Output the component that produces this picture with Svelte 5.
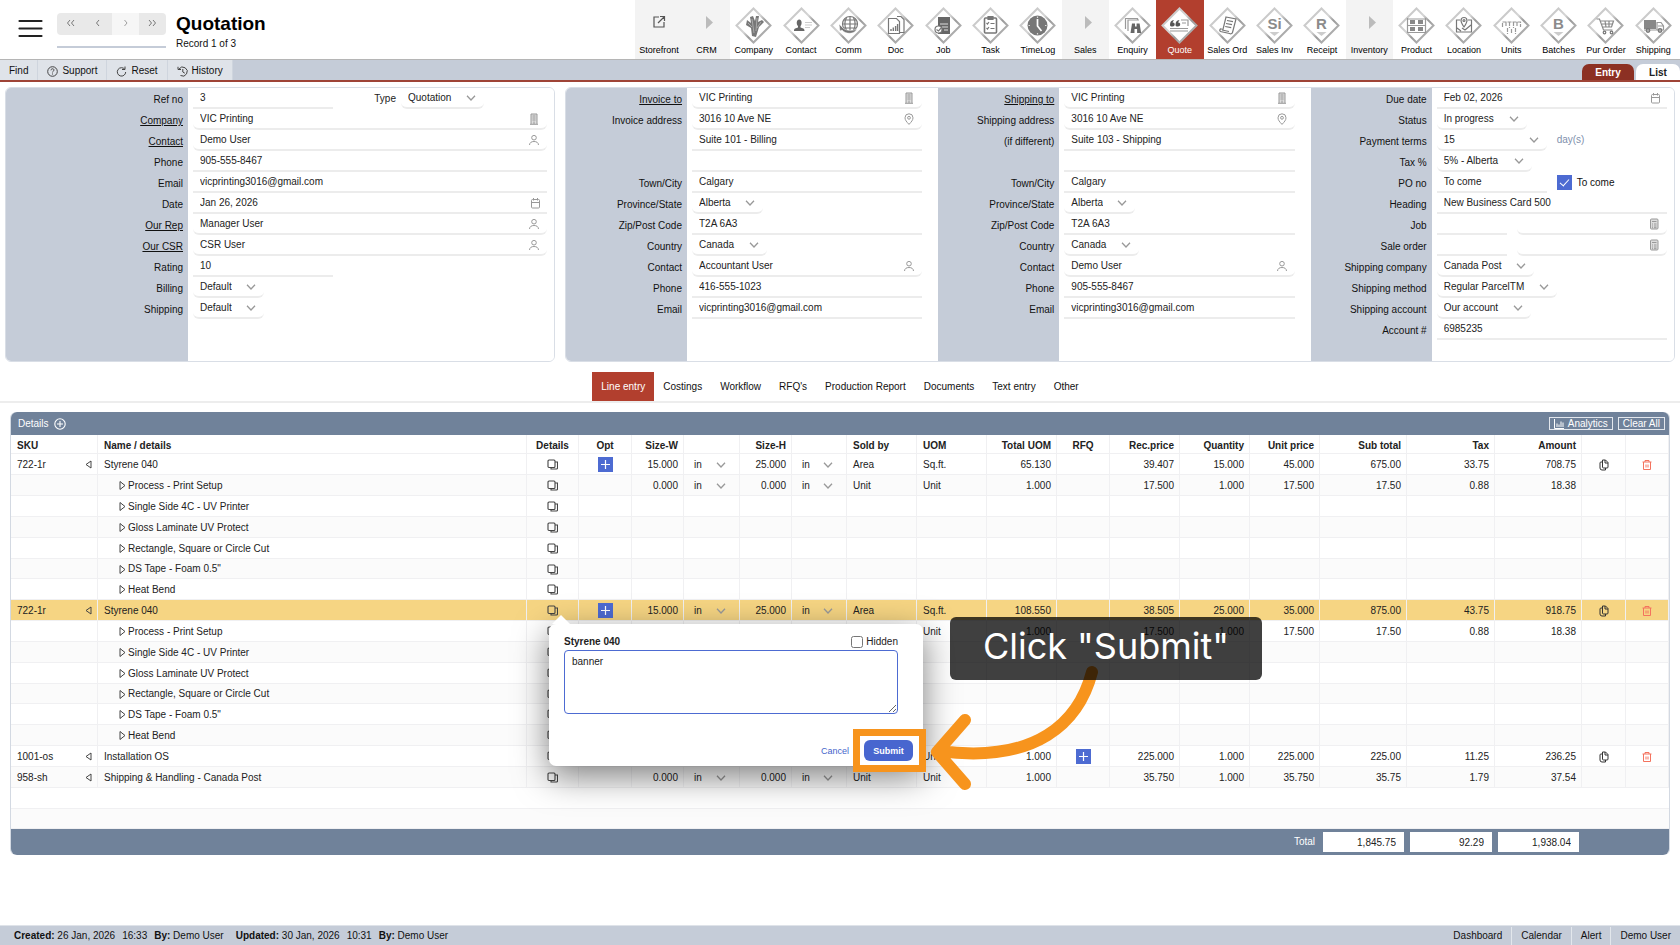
<script lang="ts">
	let modules = [
		{ name: 'Storefront', icon: 'external', group: true },
		{ name: 'CRM', icon: 'arrow', group: true },
		{ name: 'Company', icon: 'company' },
		{ name: 'Contact', icon: 'contact' },
		{ name: 'Comm', icon: 'comm' },
		{ name: 'Doc', icon: 'doc' },
		{ name: 'Job', icon: 'job' },
		{ name: 'Task', icon: 'task' },
		{ name: 'TimeLog', icon: 'time' },
		{ name: 'Sales', icon: 'arrow', group: true },
		{ name: 'Enquiry', icon: 'enquiry' },
		{ name: 'Quote', icon: 'quote', active: true },
		{ name: 'Sales Ord', icon: 'order' },
		{ name: 'Sales Inv', icon: 'Si' },
		{ name: 'Receipt', icon: 'R' },
		{ name: 'Inventory', icon: 'arrow', group: true },
		{ name: 'Product', icon: 'product' },
		{ name: 'Location', icon: 'location' },
		{ name: 'Units', icon: 'units' },
		{ name: 'Batches', icon: 'B' },
		{ name: 'Pur Order', icon: 'cart' },
		{ name: 'Shipping', icon: 'truck' }
	];

	const text = (value = '', size = '') => ({ kind: 'text', value, size });
	const combo = (value: string, icon: string) => ({ kind: 'text', value, icon, size: '', soft: true });
	const select = (value: string, size = '') => ({ kind: 'select', value, size });
	const row = (label: string, ...controls: any[]) => ({ label, controls, link: false });
	const linked = (label: string, ...controls: any[]) => ({ label, controls, link: true });

	let general = [
		row('Ref no', text('3', 'short'), { kind: 'select', value: 'Quotation', before: 'Type', size: '' }),
		linked('Company', combo('VIC Printing', 'building')),
		linked('Contact', combo('Demo User', 'user')),
		row('Phone', text('905-555-8467')),
		row('Email', text('vicprinting3016@gmail.com')),
		row('Date', { kind: 'text', value: 'Jan 26, 2026', icon: 'calendar', size: '' }),
		linked('Our Rep', combo('Manager User', 'user')),
		linked('Our CSR', combo('CSR User', 'user')),
		row('Rating', text('10', 'short')),
		row('Billing', select('Default')),
		row('Shipping', select('Default'))
	];

	let invoice = [
		linked('Invoice to', combo('VIC Printing', 'building')),
		row('Invoice address', combo('3016 10 Ave NE', 'pin')),
		row('', text('Suite 101 - Billing')),
		row('', text()),
		row('Town/City', text('Calgary')),
		row('Province/State', select('Alberta')),
		row('Zip/Post Code', text('T2A 6A3')),
		row('Country', select('Canada')),
		row('Contact', combo('Accountant User', 'user')),
		row('Phone', text('416-555-1023')),
		row('Email', text('vicprinting3016@gmail.com'))
	];

	let shipping = [
		linked('Shipping to', combo('VIC Printing', 'building')),
		row('Shipping address', combo('3016 10 Ave NE', 'pin')),
		row('(if different)', text('Suite 103 - Shipping')),
		row('', text()),
		row('Town/City', text('Calgary')),
		row('Province/State', select('Alberta')),
		row('Zip/Post Code', text('T2A 6A3')),
		row('Country', select('Canada')),
		row('Contact', combo('Demo User', 'user')),
		row('Phone', text('905-555-8467')),
		row('Email', text('vicprinting3016@gmail.com'))
	];

	let terms = [
		row('Due date', { kind: 'text', value: 'Feb 02, 2026', icon: 'calendar', size: '' }),
		row('Status', select('In progress')),
		row('Payment terms', select('15', 'medium'), { kind: 'note', value: 'day(s)' }),
		row('Tax %', select('5% - Alberta')),
		row('PO no', text('To come', 'medium'), { kind: 'check', value: 'To come' }),
		row('Heading', text('New Business Card 500')),
		row('Job', text('', 'small'), combo('', 'calc')),
		row('Sale order', text('', 'small'), combo('', 'calc')),
		row('Shipping company', select('Canada Post')),
		row('Shipping method', select('Regular ParcelTM')),
		row('Shipping account', select('Our account')),
		row('Account #', text('6985235'))
	];

	let tabs = ['Line entry', 'Costings', 'Workflow', "RFQ's", 'Production Report', 'Documents', 'Text entry', 'Other'];

	let widths = [87, 0, 52, 53, 52, 56, 52, 55, 70, 70, 70, 53, 70, 70, 70, 87, 88, 87, 44, 43];

	let steps = [
		'Single Side 4C - UV Printer',
		'Gloss Laminate UV Protect',
		'Rectangle, Square or Circle Cut',
		'DS Tape - Foam 0.5"',
		'Heat Bend'
	].map((name) => ({ name, sub: true }));

	let setup = {
		name: 'Process - Print Setup', sub: true, w: '0.000', h: '0.000', soldBy: 'Unit', uom: 'Unit',
		nums: ['1.000', '17.500', '1.000', '17.500', '17.50', '0.88', '18.38']
	};

	let lines: any[] = [
		{
			sku: '722-1r', name: 'Styrene 040', opt: true, actions: true, w: '15.000', h: '25.000', soldBy: 'Area', uom: 'Sq.ft.',
			nums: ['65.130', '39.407', '15.000', '45.000', '675.00', '33.75', '708.75']
		},
		setup,
		...steps,
		{
			sku: '722-1r', name: 'Styrene 040', opt: true, actions: true, selected: true, w: '15.000', h: '25.000', soldBy: 'Area', uom: 'Sq.ft.',
			nums: ['108.550', '38.505', '25.000', '35.000', '875.00', '43.75', '918.75']
		},
		setup,
		...steps,
		{
			sku: '1001-os', name: 'Installation OS', rfq: true, actions: true, w: '0.000', h: '0.000', soldBy: 'Unit', uom: 'Unit',
			nums: ['1.000', '225.000', '1.000', '225.000', '225.00', '11.25', '236.25']
		},
		{
			sku: '958-sh', name: 'Shipping & Handling - Canada Post', w: '0.000', h: '0.000', soldBy: 'Unit', uom: 'Unit',
			nums: ['1.000', '35.750', '1.000', '35.750', '35.75', '1.79', '37.54']
		}
	];

	let note = $state('banner');
	let hidden = $state(false);
</script>

{#snippet chevron()}
	<svg class="chevron" width="10" height="6" viewBox="0 0 10 6" fill="none" stroke="#999" stroke-width="1.3"><path d="M1 .8l4 4.2 4-4.2" /></svg>
{/snippet}

{#snippet fieldIcon(name)}
	<svg class="field-icon" width="12" height="12" viewBox="0 0 12 12" fill="none" stroke="#999" stroke-width="1">
		{#if name === 'building'}
			<path d="M3 11V1h6v10M2 11.3h8" fill="#ddd" /><path d="M4.5 3h3M4.5 5h3M4.5 7h3M6 8.5V11" />
		{:else if name === 'user'}
			<circle cx="6" cy="3.7" r="2.3" /><path d="M1.5 11c.2-2.5 2-3.5 4.5-3.5s4.3 1 4.5 3.5" />
		{:else if name === 'pin'}
			<path d="M6 11.4C3.5 8.7 2 7 2 4.8a4 4 0 0 1 8 0C10 7 8.5 8.7 6 11.4z" /><circle cx="6" cy="4.8" r="1.4" />
		{:else if name === 'calendar'}
			<rect x="3.5" y="2.5" width="8" height="8.5" rx="1" /><path d="M3.5 5.5h8M5.500 1v2.500M9.500 1v2.500" />
		{:else}
			<rect x="2.5" y="1" width="7.5" height="10" rx="1" fill="#ddd" /><path d="M4 3.5h4.5M4 6h1M6 6h2.5M4 8h1M6 8h2.5M4 9.7h1M6 9.7h2.5" />
		{/if}
	</svg>
{/snippet}

{#snippet moduleIcon(name)}
	<svg class="module-icon" width="37" height="37" viewBox="0 0 37 37" fill="none" stroke="#777" stroke-width="1.2">
		{#if name === 'external'}
			<path d="M18 10h-5v10h10v-5M19 9.5h4.5V14M23.3 9.800L17 16" stroke="#555" />
		{:else if name === 'arrow'}
			<path d="M18 9v13l7-6.5z" fill="#bbb" stroke="none" />
		{:else}
			<path d="M18.5 1.5l17 17-17 17-17-17z" fill="#fff" stroke="url(#edge)" stroke-width="2" />
			{#if name === 'company'}
				<path d="M17 29l-1-8-5-3 1-5 4 3-1-6 3-1 2 5 1-5h3l-1 6 4-2 2 2-5 5-3 10z" fill="#777" stroke="none" />
				<path d="M17 12l2 14M22 11l-1 13M26 15l-4 6M13 16l4 4" stroke="#ccc" stroke-width=".6" />
			{:else if name === 'contact'}
				<path d="M11 24c0-3 2-2.500 4-3.500v-1.500c-2-2-1.500-6.500 1.200-6.500s3.200 4.500 1.300 6.500v1.500c2 1 4 .5 4 3.500z" fill="#666" stroke="none" />
				<path d="M22 15.5h7M22 18h7M22 20.5h5" stroke="#ccc" />
			{:else if name === 'comm'}
				<circle cx="20" cy="17" r="7.5" /><path d="M12.5 17h15M13.5 13h13M14 21h12M20 9.5v15M16.5 10.500c-2 4-2 9 0 13M23.5 10.500c2 4 2 9 0 13" />
				<path d="M9 17l4 4c3 3 10 3 14 1-2 5-11 6-15 1l-2 1z" fill="#777" stroke="#fff" stroke-width=".5" />
			{:else if name === 'doc'}
				<path d="M11.5 11.5h8l3 3v12h-11z" fill="#fff" /><path d="M20 9.5h4l3 3v13h-4" />
				<path d="M14 24v-2M16.3 24v-3.5M18.6 24v-5M20.6 24v-7" stroke-width="1.4" />
			{:else if name === 'job'}
				<path d="M13 10h12v17H13z" fill="#666" stroke="none" /><path d="M15 17h8M17 20h6M19 23h4" stroke="#ddd" />
				<circle cx="13.5" cy="22.5" r="3.5" fill="#fff" /><path d="M11.5 22.5l2 1.500 3-3.500" />
			{:else if name === 'task'}
				<rect x="12.5" y="11" width="12" height="15" rx="1" stroke-width="1.6" /><path d="M16 9.5h5v3h-5z" fill="#777" />
				<path d="M14.5 16l1 1 1.5-2M14.5 21l1 1 1.5-2M18.5 16.5h4M18.5 21.5h4" />
			{:else if name === 'time'}
				<circle cx="18.5" cy="18.5" r="10" fill="#777" stroke="none" /><path d="M18.5 12v7l4 5" stroke="#fff" stroke-width="1.7" />
				<path d="M18.5 9.5v1.5M27.5 18.5H26M9.5 18.5H11M18.5 27.5V26" stroke="#ddd" />
			{:else if name === 'enquiry'}
				<path d="M14 24V13h11M11.500 22V11.500h12v2" stroke="#999" />
				<path d="M16.5 26l1.500-9.500h3v3h1.6v-3h3l1.500 9.5h-4v-4h-2.600v4z" fill="#666" stroke="none" />
			{:else if name === 'quote'}
				<path d="M9 18c0-3 1-4.5 4-5l-1.5 2.5c3-.5 3 4 0 4-1.5 0-2.5-.5-2.5-1.5zM14.5 18c0-3 1-4.5 4-5L17 15.500c3-.5 3 4 0 4-1.5 0-2.5-.5-2.5-1.500z" fill="#555" stroke="none" />
				<path d="M20 13h7v6M21 16h4M9 21.5h18M9 24h18" stroke="#999" />
			{:else if name === 'order'}
				<path d="M17 10l10 2-3.5 13.5c-.5 1.500-2 1.500-3 1l-9-2c-1.500-1-.5-3 1-2.5l1.500.3z" /><path d="M18 13.500l6 1.200M17 16.500l6 1.200M16.200 19.500l6 1.200M13 23l7 1.500" />
			{:else if name === 'product'}
				<path d="M9.5 11v15M27.5 11v15M10 18.500h17M10 25.500h17M10 12h17" stroke="#999" /><path d="M12 13h5v4h-5zM20 13h5v4h-5zM12 20h5v4h-5zM20 20h5v4h-5z" fill="#888" stroke="none" />
			{:else if name === 'location'}
				<path d="M15 13h-3.5v12h15V13H23M12 21l4 3M17 21l3 2 6-5" /><path d="M19 20c-2-3-3-4.500-3-6.500a3 3 0 0 1 6 0c0 2-1 3.500-3 6.500z" fill="#fff" /><circle cx="19" cy="13.5" r="1" />
			{:else if name === 'units'}
				<path d="M9.5 20v-5h18v5M13 15v4M16.5 15v6M20.5 15v6M24 15v4M14.5 21v6M18.5 22v5M22.5 21v6" stroke="#999" stroke-dasharray="4 1" />
			{:else if name === 'cart'}
				<path d="M9.5 12h3l4 11h9M13.5 14h13l-2 6h-9M15 17h11M18 14l1 6M22 14v6" stroke="#888" /><circle cx="17.5" cy="25.5" r="1.3" /><circle cx="24.5" cy="25.5" r="1.3" />
			{:else if name === 'truck'}
				<path d="M9 13h12v9H9z" fill="#888" stroke="none" /><path d="M22 15.5h4l2.5 3.500v4H22zM23 19h5M9 23h13" stroke="#999" /><circle cx="13" cy="23.5" r="1.8" fill="#aaa" /><circle cx="25" cy="23.5" r="1.8" fill="#aaa" />
			{:else}
				<text x="18.5" y="22" text-anchor="middle" font-size="15" font-weight="bold" fill="#8b8b8b" stroke="none">{name}</text>
				<path d="M13.500 25h10l-5 4z" fill="#ccc" stroke="none" />
			{/if}
		{/if}
	</svg>
{/snippet}

{#snippet form(id, rows)}
	<div class="form-section {id}">
		{#each rows as r, i}
			<div class="form-row">
				<label for="{id}-{i}-0">
					{#if r.link}<a href="#{id}">{r.label}</a>{:else}{r.label}{/if}
				</label>
				<div class="controls">
					{#each r.controls as c, j}
						{#if c.kind === 'text'}
							<span class="field {c.size}" class:soft={c.soft}>
								<input id="{id}-{i}-{j}" type="text" value={c.value} aria-label={r.label || 'Address line'} />
								{#if c.icon}{@render fieldIcon(c.icon)}{/if}
							</span>
						{:else if c.kind === 'select'}
							<span class="pair">
								{#if c.before}<label class="before" for="{id}-{i}-{j}">{c.before}</label>{/if}
								<span class="drop {c.size}">
									<select id="{id}-{i}-{j}"><option>{c.value}</option></select>
									{@render chevron()}
								</span>
							</span>
						{:else if c.kind === 'note'}
							<span class="note">{c.value}</span>
						{:else}
							<label class="check"><input type="checkbox" checked />{c.value}</label>
						{/if}
					{/each}
				</div>
			</div>
		{/each}
	</div>
{/snippet}

{#snippet unit(line)}
	{#if line.w}
		<span class="unit"><select aria-label="Unit"><option>in</option></select>{@render chevron()}</span>
	{/if}
{/snippet}

{#snippet plus(label)}
	<button class="plus" aria-label={label}>
		<svg width="15" height="15" viewBox="0 0 15 15" stroke="#fff" stroke-width="1.2"><path d="M7.5 3v9M3 7.5h9" /></svg>
	</button>
{/snippet}

<div class="page">
	<svg class="defs" width="0" height="0" aria-hidden="true">
		<linearGradient id="edge" x1="0" y1="0" x2="1" y2="1">
			<stop offset="0" stop-color="#bdbdbd" /><stop offset=".45" stop-color="#d5d5d5" /><stop offset=".6" stop-color="#9a9a9a" /><stop offset="1" stop-color="#c8c8c8" />
		</linearGradient>
	</svg>

	<header>
		<button class="burger" aria-label="Menu">
			<svg width="25" height="19" viewBox="0 0 25 19" stroke="#222" stroke-width="2.2" stroke-linecap="round"><path d="M1.5 2h22M1.5 9.5h22M1.5 17h22" /></svg>
		</button>
		<div class="pager">
			<div class="pager-buttons">
				<button aria-label="First"><svg width="9" height="8" viewBox="0 0 9 8"><path d="M4 1L1.5 4 4 7M8 1L5.5 4 8 7" /></svg></button>
				<button aria-label="Previous"><svg width="9" height="8" viewBox="0 0 9 8"><path d="M6 1L3.5 4 6 7" /></svg></button>
				<button aria-label="Next" class="dim"><svg width="9" height="8" viewBox="0 0 9 8"><path d="M3.5 1L6 4 3.5 7" /></svg></button>
				<button aria-label="Last"><svg width="9" height="8" viewBox="0 0 9 8"><path d="M1 1l2.5 3L1 7M5 1l2.5 3L5 7" /></svg></button>
			</div>
		</div>
		<div class="heading">
			<h1>Quotation</h1>
			<span>Record 1 of 3</span>
		</div>
		<nav class="modules">
			{#each modules as m}
				<a href="#{m.name}" class:group={m.group} class:active={m.active}>
					{@render moduleIcon(m.icon)}
					<span>{m.name}</span>
				</a>
			{/each}
		</nav>
	</header>

	<div class="toolbar">
		<button>Find</button>
		<button>
			<svg width="11" height="11" viewBox="0 0 11 11"><circle cx="5.5" cy="5.5" r="4.8" /><path d="M4 4.3c0-2 3-2 3-.2 0 1-1.5 1.1-1.5 2.3M5.5 7.5v1" /></svg>Support
		</button>
		<button>
			<svg width="11" height="11" viewBox="0 0 11 11"><path d="M8.8 3.3A4.2 4.2 0 1 0 9.7 6M9 .5v3H6" /></svg>Reset
		</button>
		<button>
			<svg width="11" height="11" viewBox="0 0 11 11"><path d="M2 3a4.5 4.5 0 1 1 1.5 6.5M1 .8v2.7h3M5.8 3v3l2 1.2" /></svg>History
		</button>
		<div class="view-tabs">
			<a href="#entry" class="active">Entry</a>
			<a href="#list">List</a>
		</div>
	</div>

	<main>
		<div class="panels">
			<div class="panel">{@render form('general', general)}</div>
			<div class="panel">
				{@render form('invoice', invoice)}
				{@render form('shipping', shipping)}
				{@render form('terms', terms)}
			</div>
		</div>

		<nav class="tabs">
			{#each tabs as tab, i}
				<a href="#tab{i}" class:active={i === 0}>{tab}</a>
			{/each}
		</nav>

		<section class="details">
			<div class="details-bar">
				<span>Details</span>
				<button class="add" aria-label="Add line">
					<svg width="12" height="12" viewBox="0 0 12 12" fill="none" stroke="#fff" stroke-width="1.1"><circle cx="6" cy="6" r="5.2" /><path d="M6 3v6M3 6h6" /></svg>
				</button>
				<div class="bar-buttons">
					<button>
						<svg width="10" height="10" viewBox="0 0 10 10" fill="none" stroke="#fff"><path d="M.5 0v9.5H10M3 8V4.5M5 8V5.5M7 8V2.5M9 8V3.5" /></svg>Analytics
					</button>
					<button>Clear All</button>
				</div>
			</div>
			<table>
				<colgroup>
					{#each widths as w}
						<col style={w ? `width: ${w}px` : ''} />
					{/each}
				</colgroup>
				<thead>
					<tr>
						<th>SKU</th>
						<th>Name / details</th>
						<th class="mid">Details</th>
						<th class="mid">Opt</th>
						<th class="num">Size-W</th>
						<th></th>
						<th class="num">Size-H</th>
						<th></th>
						<th>Sold by</th>
						<th>UOM</th>
						<th class="num">Total UOM</th>
						<th class="mid">RFQ</th>
						<th class="num">Rec.price</th>
						<th class="num">Quantity</th>
						<th class="num">Unit price</th>
						<th class="num">Sub total</th>
						<th class="num">Tax</th>
						<th class="num">Amount</th>
						<th></th>
						<th></th>
					</tr>
				</thead>
				<tbody>
					{#each lines as line}
						<tr class:selected={line.selected}>
							<td>
								{#if line.sku}
									<span class="sku">{line.sku}<svg width="7" height="9" viewBox="0 0 7 9" fill="none" stroke="#444"><path d="M6 1v7L1 4.5z" /></svg></span>
								{/if}
							</td>
							<td>
								{#if line.sub}
									<span class="sub"><svg width="7" height="9" viewBox="0 0 7 9" fill="none" stroke="#444"><path d="M1 .5v8l5-4z" /></svg>{line.name}</span>
								{:else}
									{line.name}
								{/if}
							</td>
							<td class="mid anchor">
								<button class="icon" aria-label="Details">
									<svg width="11" height="11" viewBox="0 0 11 11" fill="none" stroke="#444" stroke-width="1.1"><rect x="1" y="1" width="7" height="7.5" rx="1" /><path d="M4 8.5V10h5.5a1 1 0 0 0 1-1V3H8" /></svg>
								</button>
								{#if line.selected}
									<div class="popover">
										<div class="popover-head">
											<strong>{line.name}</strong>
											<label><input type="checkbox" bind:checked={hidden} />Hidden</label>
										</div>
										<textarea aria-label="Line note" bind:value={note}></textarea>
										<div class="popover-actions">
											<button class="cancel">Cancel</button>
											<button class="submit">Submit</button>
										</div>
										<div class="marker"></div>
										<svg class="pointer" width="560" height="180" viewBox="0 0 560 180" fill="none" stroke="#f7941d" stroke-width="12" stroke-linecap="round" stroke-linejoin="round">
											<path d="M543 48C530 98 488 140 390 127M416 96l-28 32 28 32" />
										</svg>
										<div class="callout">Click "Submit"</div>
									</div>
								{/if}
							</td>
							<td class="mid">{#if line.opt}{@render plus('Options')}{/if}</td>
							<td class="num">{line.w ?? ''}</td>
							<td>{@render unit(line)}</td>
							<td class="num">{line.h ?? ''}</td>
							<td>{@render unit(line)}</td>
							<td>{line.soldBy ?? ''}</td>
							<td>{line.uom ?? ''}</td>
							<td class="num">{line.nums?.[0] ?? ''}</td>
							<td class="mid">{#if line.rfq}{@render plus('Request quote')}{/if}</td>
							{#each [1, 2, 3, 4, 5, 6] as n}
								<td class="num">{line.nums?.[n] ?? ''}</td>
							{/each}
							<td class="mid">
								{#if line.actions}
									<button class="icon" aria-label="Copy line">
										<svg width="10" height="12" viewBox="0 0 10 12" fill="none" stroke="#333"><path d="M3.5 1h3L9 3.500V8a1 1 0 0 1-1 1H4.5a1 1 0 0 1-1-1zM6 1v3h3M3.5 3H2a1 1 0 0 0-1 1v5a2 2 0 0 0 2 2h3.500V9" /></svg>
									</button>
								{/if}
							</td>
							<td class="mid">
								{#if line.actions}
									<button class="icon" aria-label="Delete line">
										<svg width="10" height="12" viewBox="0 0 10 12" fill="none" stroke="#f4735e"><path d="M.5 3h9M3 3V1.500h4V3M1.500 3v7.500h7V3M4 5.500v3M6 5.500v3" /></svg>
									</button>
								{/if}
							</td>
						</tr>
					{/each}
					<tr class="blank"><td colspan="20"></td></tr>
					<tr class="blank"><td colspan="20"></td></tr>
				</tbody>
				<tfoot>
					<tr>
						<td colspan="15" class="num">Total</td>
						<td><input aria-label="Total sub total" value="1,845.75" readonly /></td>
						<td><input aria-label="Total tax" value="92.29" readonly /></td>
						<td><input aria-label="Total amount" value="1,938.04" readonly /></td>
						<td colspan="2"></td>
					</tr>
				</tfoot>
			</table>
		</section>
	</main>

	<footer>
		<span><b>Created:</b> 26 Jan, 2026</span>
		<span>16:33</span>
		<span><b>By:</b> Demo User</span>
		<span class="updated"><b>Updated:</b> 30 Jan, 2026</span>
		<span>10:31</span>
		<span><b>By:</b> Demo User</span>
		<nav>
			<a href="#dashboard">Dashboard</a>
			<a href="#calendar">Calendar</a>
			<a href="#alert">Alert</a>
			<a href="#user">Demo User</a>
		</nav>
	</footer>
</div>

<style>
	:global(body) {
		background: #fff;
	}

	.page {
		display: flex;
		flex-direction: column;
		min-height: 100vh;
		font-family: 'Liberation Sans', Arial, sans-serif;
		font-size: 10px;
		line-height: 14px;
		color: #222;
	}

	.page * {
		box-sizing: border-box;
	}

	.defs {
		position: absolute;
	}

	button,
	input,
	select,
	textarea {
		font: inherit;
		color: inherit;
		margin: 0;
		padding: 0;
		border: 0;
		background: none;
	}

	a {
		color: inherit;
		text-decoration: none;
	}

	header {
		display: flex;
		height: 60px;
		border-bottom: 1px solid #b5b5b5;
	}

	.burger {
		display: flex;
		padding: 19px 14px 0 18px;
	}

	.pager {
		padding-top: 13px;
		width: 109px;
	}

	.pager-buttons {
		display: flex;
		height: 35px;
		padding-bottom: 11px;
		border-bottom: 2px solid #c5ccd8;
	}

	.pager-buttons button {
		flex: 1;
		background: #e9e9e9;
	}

	.pager-buttons button:first-child {
		border-radius: 4px 0 0 4px;
	}

	.pager-buttons button:last-child {
		border-radius: 0 4px 4px 0;
	}

	.pager-buttons .dim {
		background: #f3f3f3;
		opacity: 0.7;
	}

	.pager-buttons svg {
		fill: none;
		stroke: #777;
	}

	.heading {
		padding: 13px 0 0 10px;
	}

	.heading h1 {
		margin: 0 0 2px;
		font-size: 19px;
		line-height: 22px;
		color: #000;
	}

	.heading span {
		display: block;
		color: #111;
	}

	.modules {
		display: grid;
		grid-template-columns: repeat(22, minmax(0, 1fr));
		width: 62%;
		margin-left: auto;
		margin-right: 3px;
		font-size: 9px;
		line-height: 13px;
	}

	.modules a {
		display: flex;
		flex-direction: column;
		align-items: center;
		padding-top: 7px;
		white-space: nowrap;
		color: #000;
	}

	.modules .group {
		background: #f3f3f3;
	}

	.modules .active {
		background: #b23f2e;
		color: #fff;
	}

	.toolbar {
		display: flex;
		height: 22px;
		background: #c5ccd8;
		border-bottom: 2px solid #9f4437;
	}

	.toolbar button {
		display: flex;
		align-items: center;
		gap: 4px;
		padding: 2px 9px 0;
		background: #dfe3e9;
		border-right: 1px solid #cfd5de;
		color: #111;
	}

	.toolbar svg {
		fill: none;
		stroke: #444;
	}

	.view-tabs {
		display: flex;
		gap: 2px;
		align-items: flex-end;
		margin-left: auto;
		font-weight: bold;
	}

	.view-tabs a {
		width: 52px;
		padding: 2px 0 0;
		text-align: center;
		border-radius: 7px 7px 0 0;
		background: #fff;
	}

	.view-tabs a:last-child {
		width: 44px;
	}

	.view-tabs .active {
		background: #8c3023;
		color: #fff;
	}

	main {
		flex: 1;
		padding-top: 5px;
	}

	.panels {
		display: grid;
		grid-template-columns: 55fr 111fr;
		gap: 10px;
		padding: 0 5px;
	}

	.panel {
		display: flex;
		min-height: 275px;
		overflow: hidden;
		border: 1px solid #d9dee6;
		border-radius: 6px;
	}

	.page .form-section {
		--label: 121px;
		box-sizing: content-box;
		flex: 1 1 0;
		min-width: 0;
		padding-right: 16px;
		background: linear-gradient(to right, #c5ccd8 var(--label), #fff 0);
	}

	.page .form-section.general {
		--label: 182px;
		padding-right: 7px;
	}

	.page .form-section.terms {
		padding-right: 7px;
	}

	.form-row {
		display: grid;
		grid-template-columns: var(--label) minmax(0, 1fr);
		height: 21px;
	}

	.form-row > label {
		padding: 5px 5px 0 0;
		text-align: right;
		color: #111;
	}

	.form-row a {
		text-decoration: underline;
	}

	.controls {
		display: flex;
		gap: 10px;
		padding-left: 5px;
	}

	.field {
		display: flex;
		align-items: center;
		flex: 1;
		min-width: 0;
		padding: 0 7px;
		border-bottom: 2px solid #ececec;
	}

	.field.soft,
	.drop {
		border-bottom: 2px solid #ececec;
		border-radius: 0 0 6px 6px;
	}

	.field input {
		flex: 1;
		width: 0;
	}

	.short {
		flex: 0 0 140px;
	}

	.small {
		flex: 0 0 70px;
	}

	.field.medium {
		flex: 0 0 110px;
	}

	.pair {
		display: flex;
		gap: 5px;
	}

	.before {
		width: 53px;
		padding-top: 4px;
		text-align: right;
	}

	.drop {
		display: grid;
		align-items: center;
	}

	.drop.medium {
		width: 110px;
	}

	.drop > select,
	.drop > .chevron,
	.unit > select,
	.unit > .chevron {
		grid-area: 1 / 1;
	}

	select {
		appearance: none;
		outline: 0;
	}

	.drop select {
		padding: 0 32px 0 7px;
	}

	.chevron {
		justify-self: end;
		margin-right: 8px;
		pointer-events: none;
	}

	.note {
		padding-top: 3px;
		color: #8090ac;
	}

	.check {
		display: flex;
		align-items: center;
		gap: 5px;
		color: #111;
	}

	.check input {
		appearance: none;
		width: 15px;
		height: 15px;
		background: #4d6bd2;
		display: grid;
		place-items: center;
	}

	.check input::after {
		content: '';
		width: 4px;
		height: 8px;
		margin-bottom: 3px;
		border: solid #fff;
		border-width: 0 1px 1px 0;
		transform: rotate(42deg);
	}

	.tabs {
		display: flex;
		justify-content: center;
		margin-top: 10px;
		border-bottom: 2px solid #ededed;
	}

	.tabs a {
		padding: 8px 9px 7px;
		color: #111;
	}

	.tabs .active {
		background: #b23f2e;
		color: #fff;
	}

	.details {
		margin: 9px 10px 0;
		border: solid #d3d9e2;
		border-width: 0 1px;
		border-radius: 6px;
	}

	.details-bar {
		display: flex;
		align-items: center;
		gap: 5px;
		height: 23px;
		padding: 0 4px 0 7px;
		background: #70829a;
		border-radius: 6px 6px 0 0;
		color: #fff;
	}

	.add {
		display: flex;
	}

	.bar-buttons {
		display: flex;
		gap: 5px;
		margin-left: auto;
	}

	.bar-buttons button {
		display: flex;
		align-items: center;
		gap: 4px;
		height: 13px;
		padding: 0 4px;
		border: 1px solid #e3e7ed;
	}

	table {
		width: 100%;
		table-layout: fixed;
		border-spacing: 0;
	}

	th,
	td {
		height: 21px;
		padding: 1px 5px 0 6px;
		border: solid #f0f0f2;
		border-width: 0 1px 1px 0;
		text-align: left;
		white-space: nowrap;
	}

	th {
		height: 19px;
		padding-top: 3px;
	}

	tbody tr:nth-child(even) {
		background: #fbfbfb;
	}

	tbody tr:nth-child(6n) td {
		height: 20px;
	}

	tbody .selected,
	tbody tr.selected:nth-child(even) {
		background: #f6d583;
	}

	.blank td {
		border-right: 0;
	}

	.num {
		text-align: right;
	}

	.mid {
		padding-left: 0;
		padding-right: 0;
		text-align: center;
	}

	.anchor {
		position: relative;
	}

	.icon,
	.plus {
		display: flex;
		justify-content: center;
		margin: 0 auto;
	}

	.plus {
		width: 15px;
		background: #4d6bd2;
	}

	.sku {
		display: flex;
		align-items: center;
		justify-content: space-between;
	}

	.sub {
		display: flex;
		align-items: center;
		gap: 2px;
		padding-left: 15px;
	}

	.unit {
		display: grid;
		align-items: center;
	}

	.unit select {
		padding-left: 4px;
	}

	tfoot td {
		height: 26px;
		padding: 0 3px;
		border: 0;
		background: #70829a;
		color: #fff;
	}

	tfoot td:first-child {
		padding-right: 5px;
		border-radius: 0 0 0 6px;
	}

	tfoot td:last-child {
		border-radius: 0 0 6px 0;
	}

	tfoot input {
		display: block;
		width: 100%;
		height: 20px;
		padding-right: 8px;
		background: #fff;
		color: #222;
		text-align: right;
	}

	.popover {
		position: absolute;
		top: 24px;
		left: 22px;
		z-index: 5;
		width: 374px;
		padding: 11px 25px 5px 15px;
		border-radius: 7px;
		background: #fff;
		box-shadow: 0 10px 34px rgba(0, 0, 0, 0.5);
		text-align: left;
	}

	.popover::before {
		content: '';
		position: absolute;
		left: 3px;
		top: -9px;
		border: solid transparent;
		border-width: 0 9px 9px;
		border-bottom-color: #fff;
	}

	.popover-head {
		display: flex;
		justify-content: space-between;
		align-items: center;
	}

	.popover-head label {
		display: flex;
		align-items: center;
		gap: 3px;
	}

	.popover-head input {
		width: 12px;
		height: 12px;
	}

	textarea {
		display: block;
		width: 100%;
		height: 64px;
		margin-top: 1px;
		padding: 4px 7px;
		border: 1px solid #4d6bd2;
		border-radius: 4px;
		outline: 0;
	}

	.popover-actions {
		display: flex;
		justify-content: flex-end;
		align-items: center;
		gap: 15px;
		margin: 26px -15px 0 0;
		font-size: 9px;
	}

	.cancel {
		color: #4564cb;
	}

	.submit {
		width: 49px;
		height: 21px;
		border-radius: 6px;
		background: #4866cf;
		color: #fff;
		font-weight: bold;
	}

	/* guide overlay pointing at the submit button */
	.marker {
		position: absolute;
		top: 105px;
		left: 304px;
		width: 73px;
		height: 43px;
		border: 7px solid #f7941d;
		pointer-events: none;
	}

	.pointer {
		position: absolute;
		top: 0;
		left: 0;
		pointer-events: none;
	}

	.callout {
		position: absolute;
		top: -7px;
		left: 401px;
		width: 312px;
		padding-bottom: 5px;
		border-radius: 6px;
		background: rgba(0, 0, 0, 0.75);
		color: #fff;
		font-family: Inter, sans-serif;
		font-size: 36px;
		line-height: 58px;
		text-align: center;
	}

	footer {
		display: flex;
		align-items: center;
		gap: 7px;
		height: 20px;
		padding: 1px 0 0 14px;
		background: #c5ccd8;
		border-top: 1px solid #dfe3e9;
		color: #111;
	}

	.updated {
		margin-left: 5px;
	}

	footer nav {
		display: flex;
		align-self: stretch;
		margin-left: auto;
	}

	footer nav a {
		padding: 2px 9px 0;
		border-left: 1px solid #e3e7ec;
	}

	footer nav a:first-child {
		border-left: 0;
	}
</style>
